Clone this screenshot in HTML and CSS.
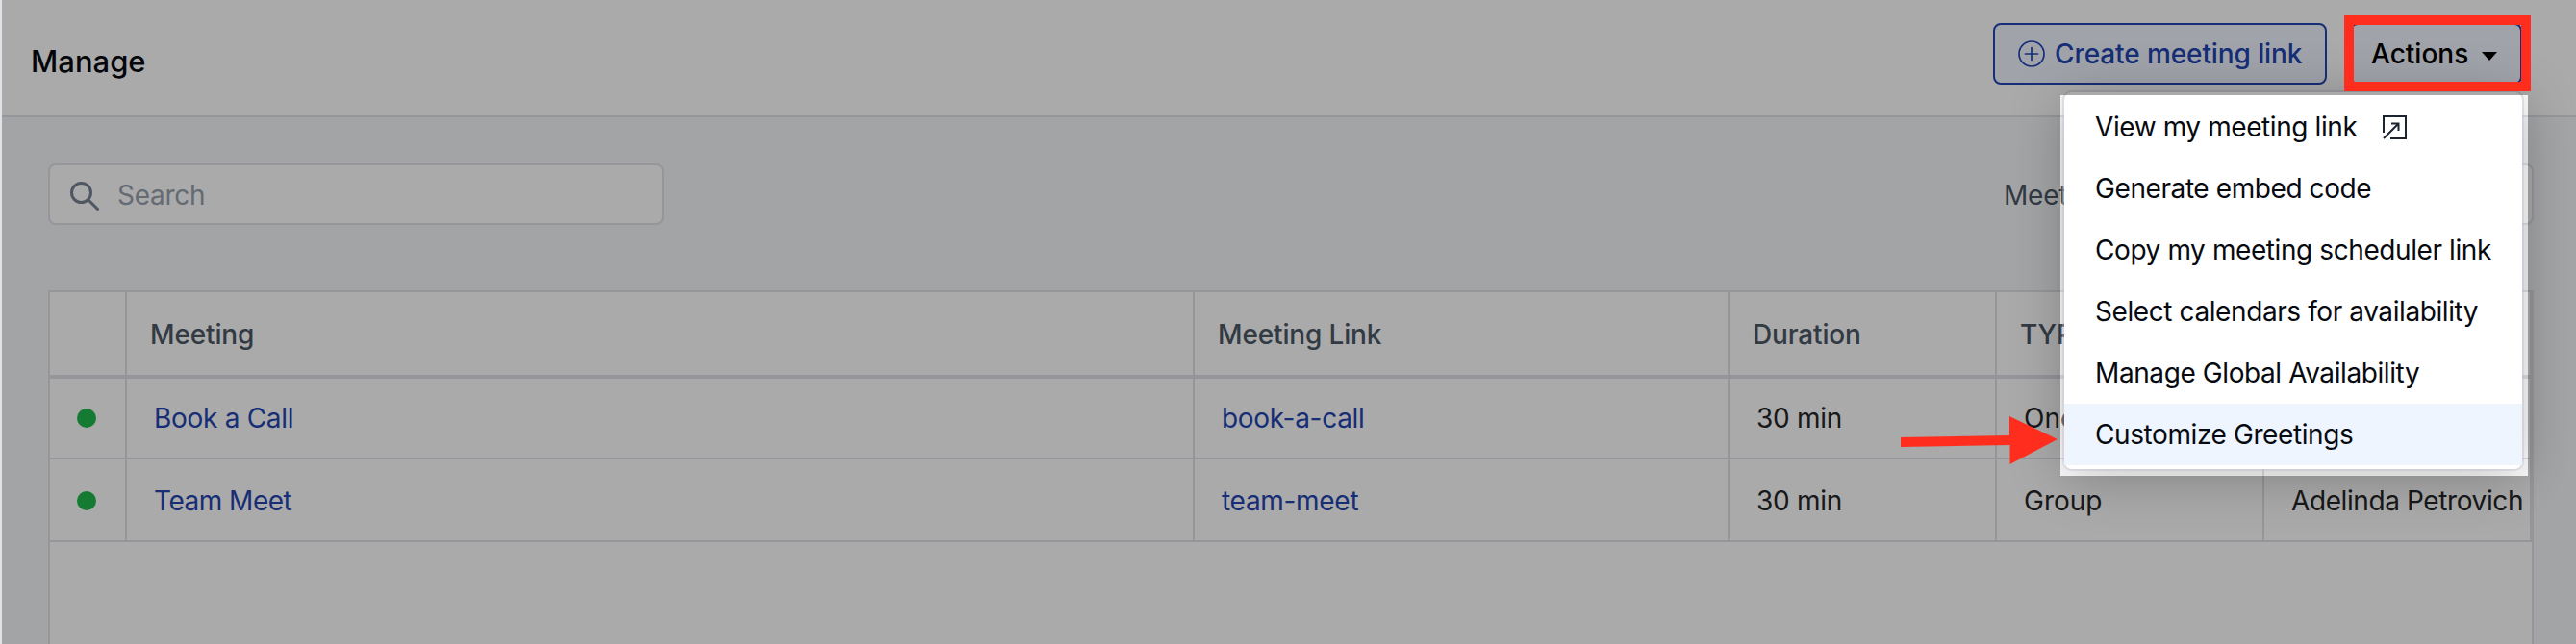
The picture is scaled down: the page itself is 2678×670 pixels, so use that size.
FILE: index.html
```html
<!DOCTYPE html>
<html lang="en">
<head>
<meta charset="utf-8">
<title>Manage</title>
<link rel="stylesheet" href="styles.css">
</head>
<body>
<div class="app">
  <header class="topbar">
    <h1 class="title">Manage</h1>
    <div class="buttons">
      <button class="btn btn-create">
        <svg class="plus" viewBox="0 0 28 28"><circle cx="14" cy="14" r="13"/><path d="M14 7.500v13M7.500 14h13"/></svg>
        <span class="create-label">Create meeting link</span>
      </button>
      <button class="btn btn-actions"><span class="actions-label">Actions</span><svg class="caret" viewBox="0 0 16 9"><path d="M0 0h16L8 9z"/></svg></button>
    </div>
  </header>
  <main class="content">
    <div class="filters">
      <div class="search">
        <svg class="search-icon" viewBox="0 0 30 30"><circle cx="11.5" cy="11.5" r="10"/><path d="M19 19l9.500 9.500"/></svg>
        <span class="placeholder">Search</span>
      </div>
      <div class="filter"><span class="filter-label">Meet</span><div class="select"></div></div>
    </div>
    <div class="table">
      <div class="row head">
        <div class="cell"></div><div class="cell">Meeting</div><div class="cell">Meeting Link</div><div class="cell">Duration</div><div class="cell">TYPE</div><div class="cell"></div>
      </div>
      <div class="row">
        <div class="cell dot-cell"><i class="dot"></i></div><div class="cell link">Book a Call</div><div class="cell link">book-a-call</div><div class="cell">30 min</div><div class="cell group">One</div><div class="cell"></div>
      </div>
      <div class="row second">
        <div class="cell dot-cell"><i class="dot"></i></div><div class="cell link team">Team Meet</div><div class="cell link">team-meet</div><div class="cell">30 min</div><div class="cell group">Group</div><div class="cell owner">Adelinda Petrovich</div>
      </div>
    </div>
  </main>
  <div class="menu">
    <div class="item"><span>View my meeting link</span><svg class="external" viewBox="0 0 25 25"><path d="M1 18V1h23v23H8M1 24L16.500 8.500M9 8.500h7.500V16"/></svg></div>
    <div class="item">Generate embed code</div>
    <div class="item">Copy my meeting scheduler link</div>
    <div class="item">Select calendars for availability</div>
    <div class="item">Manage Global Availability</div>
    <div class="item active">Customize Greetings</div>
  </div>
  <div class="spotlight"></div>
  <div class="marker"></div>
  <svg class="arrow" viewBox="0 0 164 52"><path d="M0 23l113-2V1l50 24-49.500 26V31L0 33z"/></svg>
</div>
</body>
</html>
```
FILE: styles.css
```css
* { box-sizing: border-box; }
body { margin: 0; font-family: Inter, "Liberation Sans", sans-serif; font-size: 28px; color: #252628; }
.app { position: relative; width: 2678px; height: 670px; overflow: hidden; display: flex; flex-direction: column; background: #f5f7f9; border-left: 2px solid #e1e1e8; white-space: nowrap; }
.topbar { height: 122px; flex: none; display: flex; justify-content: space-between; background: #fff; border-bottom: 2px solid #e1e1e8; padding: 24px 56px 0 30px; }
.title { margin: 0; padding-top: 22px; font-size: 31px; line-height: 36px; font-weight: 500; color: #060a10; }
.buttons { display: flex; gap: 24px; }
.btn { height: 64px; display: flex; align-items: center; border: 2px solid #2345b2; border-radius: 8px; background: #f0f6ff; font: 500 28px Inter, "Liberation Sans", sans-serif; padding: 0; white-space: nowrap; }
.btn-create { width: 347px; color: #2345b2; padding-left: 24px; gap: 10px; letter-spacing: -.1px; }
.btn-actions { width: 179px; color: #000; padding-left: 20px; }
.actions-label { width: 115px; text-align: left; }
.plus { width: 28px; height: 28px; margin-top: -1px; fill: none; stroke: #2345b2; stroke-width: 1.7; stroke-linecap: round; }
.caret { width: 16px; height: 9px; margin-top: 5px; }
.content { padding: 48px 44px 0 48px; flex: 1; display: flex; flex-direction: column; }
.filters { display: flex; justify-content: space-between; height: 64px; flex: none; }
.search { width: 640px; display: flex; align-items: center; gap: 19px; padding-left: 21px; background: #fff; border: 2px solid #e1e1e8; border-radius: 8px; }
.search-icon { width: 30px; height: 30px; margin-top: 3px; fill: none; stroke: #768393; stroke-width: 3; stroke-linecap: round; }
.placeholder { padding-top: 2px; color: #97a1ae; letter-spacing: -.25px; }
.filter { width: 551px; display: flex; align-items: center; gap: 40px; color: #4c5766; }
.filter-label { padding-top: 1px; letter-spacing: -.2px; }
.select { flex: 1; height: 64px; background: #fff; border: 2px solid #e1e1e8; border-radius: 8px; }
.table { margin-top: 68px; flex: 1; background: #fff; border: 2px solid #e1e1e8; border-bottom: 0; }
.row { display: grid; grid-template-columns: 80px 1110px 556px 278px 278px 278px; height: 84px; border-bottom: 2px solid #e1e1e8; letter-spacing: -.3px; }
.row.second { height: 86px; }
.head.row { height: 90px; border-bottom-width: 4px; font-weight: 500; color: #4c5766; letter-spacing: -.15px; }
.cell { display: flex; align-items: center; border-right: 2px solid #e1e1e8; padding: 0 0 0 28px; overflow: hidden; }
.second .cell { padding-top: 2px; }
.head .cell { padding: 2px 0 0 24px; }
.dot { width: 20px; height: 20px; border-radius: 50%; background: #20b74c; }
.link { color: #2345b2; }
.team { letter-spacing: -.5px; }
.group { letter-spacing: 0; }
.owner { letter-spacing: -.4px; }
.menu { position: absolute; left: 2144px; top: 96px; width: 476px; height: 392px; padding: 4px 0; background: #fff; border-radius: 8px; box-shadow: 0 0 0 2px rgba(190,190,205,.4), 0 8px 56px rgba(0,0,0,.25); color: #060a10; letter-spacing: -.41px; }
.item { height: 64px; display: flex; align-items: center; padding: 0 0 0 32px; }
.active { background: #eef5ff; }
.external { width: 25px; height: 25px; margin-left: 27px; fill: none; stroke: #1c2430; stroke-width: 2; }
.spotlight { position: absolute; left: 2140px; top: 99px; width: 486px; height: 396px; box-shadow: 0 0 0 3000px rgba(0,0,0,.333); }
.marker { position: absolute; left: 2435px; top: 16px; width: 194px; height: 79px; border: 10px solid #ff2d1e; }
.arrow { position: absolute; left: 1974px; top: 432px; width: 164px; height: 52px; fill: #ff2d1e; }
```
